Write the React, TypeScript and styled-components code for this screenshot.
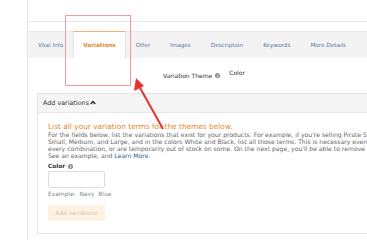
import * as React from 'react'
import styled, { createGlobalStyle } from 'styled-components'

const GlobalStyle = createGlobalStyle`
  html, body {
    margin: 0;
    padding: 0;
    background: #fff;
    overflow: hidden;
  }
  body {
    font-family: "DejaVu Sans", Verdana, sans-serif;
  }
`

const Frame = styled.div`
  position: relative;
  width: 367px;
  height: 240px;
  overflow: hidden;
`

const Main = styled.div`
  margin-left: 27px;
  border-left: 1px solid #e4e4e4;
  height: 240px;
  width: 460px;
`

const TopBox = styled.div`
  height: 21px;
  border-bottom: 1px solid #e6e6e6;
`

const TabBar = styled.div`
  margin-top: 9px;
  height: 26px;
  display: flex;
  background: #f3f3f3;
  border-top: 1px solid #e8e8e8;
`

const Tab = styled.div<{ $active?: boolean }>`
  display: flex;
  align-items: center;
  padding: 0 9px;
  font-size: 5.7px;
  color: ${p => (p.$active ? '#e2892b' : '#5a7aa0')};
  font-weight: ${p => (p.$active ? 'bold' : 'normal')};
  background: ${p => (p.$active ? '#fff' : 'transparent')};
  border-top: 1px solid ${p => (p.$active ? '#f0b070' : 'transparent')};
  border-left: 1px solid ${p => (p.$active ? '#e4e4e4' : 'transparent')};
  border-right: 1px solid ${p => (p.$active ? '#e4e4e4' : 'transparent')};
  margin-top: -1px;
  white-space: nowrap;
`

const ThemeRow = styled.div`
  height: 35px;
  display: flex;
  align-items: center;
  padding-left: 135px;
  font-size: 6px;
  color: #333;
`

const InfoDot = styled.span`
  display: inline-flex;
  align-items: center;
  justify-content: center;
  width: 5px;
  height: 5px;
  border-radius: 50%;
  background: #8a8a8a;
  color: #fff;
  font-size: 4px;
  font-weight: bold;
  margin-left: 3px;
  vertical-align: middle;
`

const ThemeValue = styled.span`
  margin-left: 9px;
  position: relative;
  top: -3px;
`

const Panel = styled.div`
  margin-left: 9px;
  border: 1px solid #e4e4e4;
  border-right: none;
  height: 139px;
`

const PanelHeader = styled.div`
  height: 18px;
  display: flex;
  align-items: center;
  padding-left: 5px;
  background: #f5f5f5;
  border-bottom: 1px solid #e8e8e8;
  font-size: 6.4px;
  color: #333;
`

const Caret = styled.svg`
  margin-left: 1px;
  margin-top: -1px;
`

const PanelBody = styled.div`
  padding: 9px 0 0 10px;
`

const Heading = styled.div`
  font-size: 7.4px;
  color: #e2892b;
  line-height: 9px;
  white-space: nowrap;
`

const Help = styled.div`
  font-size: 6.1px;
  line-height: 7px;
  color: #666;
  white-space: nowrap;
`

const Link = styled.span`
  color: #2a5d9a;
`

const FieldLabel = styled.div`
  margin-top: 4px;
  font-size: 5.8px;
  font-weight: bold;
  color: #333;
  display: flex;
  align-items: center;
`

const TextInput = styled.div`
  margin-top: 2px;
  width: 55px;
  height: 15px;
  border: 1px solid #dcdcdc;
  border-radius: 2px;
`

const Example = styled.div`
  margin-top: 3px;
  font-size: 5.9px;
  color: #888;
  word-spacing: 2px;
`

const AddButton = styled.div`
  margin-top: 8px;
  width: 57px;
  height: 16px;
  background: #fcf1e2;
  border-radius: 2px;
  display: flex;
  align-items: center;
  justify-content: center;
  font-size: 5.9px;
  color: #d9c8b0;
`

const Highlight = styled.div`
  position: absolute;
  left: 65px;
  top: 15px;
  width: 64px;
  height: 69px;
  border: 1px solid #f19a9a;
`

const ArrowMark = styled.svg`
  position: absolute;
  left: 130px;
  top: 74px;
`

const App: React.FunctionComponent = () => {
  const tabs = ['Vital Info', 'Variations', 'Offer', 'Images', 'Description', 'Keywords', 'More Details']

  return (
    <>
      <GlobalStyle />
      <Frame>
        <Main>
          <TopBox />
          <TabBar>
            {tabs.map(tab => (
              <Tab key={tab} $active={tab === 'Variations'}>{tab}</Tab>
            ))}
          </TabBar>
          <ThemeRow>
            Variation Theme<InfoDot>i</InfoDot>
            <ThemeValue>Color</ThemeValue>
          </ThemeRow>
          <Panel>
            <PanelHeader>
              Add variations
              <Caret width="6" height="5" viewBox="0 0 6 5">
                <polyline points="0.8,4 3,1.5 5.2,4" fill="none" stroke="#222" strokeWidth="1.4" />
              </Caret>
            </PanelHeader>
            <PanelBody>
              <Heading>List all your variation terms for the themes below.</Heading>
              <Help>
                For the fields below, list the variations that exist for your products. For example, if you're selling Pirate Shirts
                <br />
                Small, Medium, and Large, and in the colors White and Black, list all those terms. This is necessary even
                <br />
                every combination, or are temporarily out of stock on some. On the next page, you'll be able to remove
                <br />
                See an example, and <Link>Learn More</Link>.
              </Help>
              <FieldLabel>Color<InfoDot>i</InfoDot></FieldLabel>
              <TextInput />
              <Example>Example: Navy Blue</Example>
              <AddButton>Add variations</AddButton>
            </PanelBody>
          </Panel>
        </Main>
        <Highlight />
        <ArrowMark width="40" height="60" viewBox="0 0 40 60">
          <line x1="33" y1="55" x2="9" y2="12" stroke="#e8322b" strokeWidth="2" />
          <polygon points="6,4 4,17 14,12" fill="#e8322b" />
        </ArrowMark>
      </Frame>
    </>
  )
}

export default App
